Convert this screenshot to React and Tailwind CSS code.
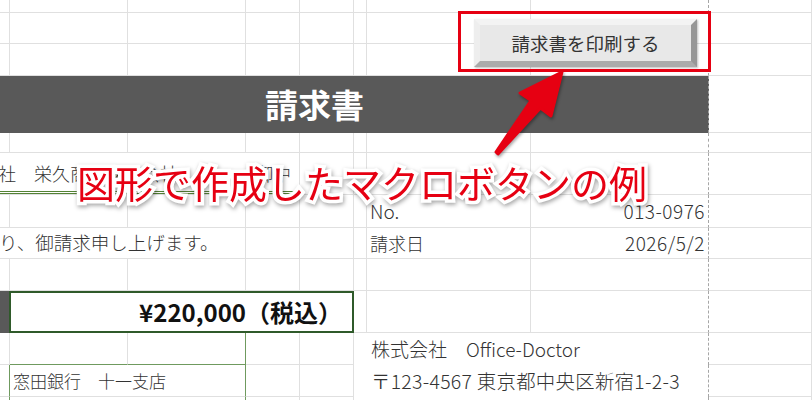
import React from "react";
import clsx from "clsx";

const W = [
  "w-[10px]",
  "w-[118px]",
  "w-[118px]",
  "w-[54px]",
  "w-[54px]",
  "w-[13px]",
  "w-[164px]",
  "w-[178px]",
  "w-[103px]",
];

function Cell({ w, className = "", children, dashed, noB }) {
  return (
    <div
      className={clsx(
        "shrink-0 h-full border-r border-[#e0e0e0]",
        !noB && "border-b",
        w,
        dashed && "border-r-[#a6a6a6] [border-right-style:dashed]",
        className
      )}
    >
      {children}
    </div>
  );
}

function Row({ h, children }) {
  return <div className={clsx("flex shrink-0", h)}>{children}</div>;
}

function Plain({ from = 0, to = 9 }) {
  const out = [];
  for (let i = from; i < to; i++) {
    out.push(<Cell key={i} w={W[i]} dashed={i === 7} />);
  }
  return out;
}

export default function App() {
  return (
    <div className="relative w-[812px] h-[400px] overflow-hidden bg-white font-['Noto_Sans_CJK_JP',sans-serif] font-light text-[#333333]">
      <div className="flex flex-col">
        <Row h="h-[13px]">
          <Plain />
        </Row>
        <Row h="h-[31px]">
          <Plain />
        </Row>
        <Row h="h-[32px]">
          <Plain />
        </Row>
        <Row h="h-[57px]">
          <div className="shrink-0 h-full w-[709px] bg-[#595959] border-r border-r-[#a6a6a6] [border-right-style:dashed] flex items-center pl-[265px]">
            <span className="text-white font-bold text-[33px] leading-none">請求書</span>
          </div>
          <Cell w={W[8]} />
        </Row>
        <Row h="h-[20px]">
          <Plain />
        </Row>
        <Row h="h-[42px]">
          <div className="shrink-0 h-full w-[300px] border-r border-b border-[#e0e0e0] flex flex-col">
            <div className="flex-1 flex items-center justify-between pr-[8px] pt-[2px] text-[18px] whitespace-nowrap">
              <span className="-ml-[2px]">社　栄久商事株式会社</span>
              <span>御中</span>
            </div>
            <div className="h-[3px] border-y border-[#548235]" />
          </div>
          <Plain from={4} />
        </Row>
        <Row h="h-[33px]">
          <Plain to={6} />
          <Cell w={W[6]} className="flex items-center pl-[3px] text-[19px]">
            No.
          </Cell>
          <Cell w={W[7]} dashed className="flex items-center justify-end pr-[3px] text-[19px] tracking-[0.5px]">
            013-0976
          </Cell>
          <Cell w={W[8]} />
        </Row>
        <Row h="h-[31px]">
          <Cell w="w-[246px]" className="flex items-center text-[18.5px] whitespace-nowrap">
            <span className="-ml-[1px]">り、御請求申し上げます。</span>
          </Cell>
          <Plain from={3} to={6} />
          <Cell w={W[6]} className="flex items-center pl-[3px] text-[18px]">
            請求日
          </Cell>
          <Cell w={W[7]} dashed className="flex items-center justify-end pr-[3px] text-[19px] tracking-[0.5px]">
            2026/5/2
          </Cell>
          <Cell w={W[8]} />
        </Row>
        <Row h="h-[32px]">
          <Plain />
        </Row>
        <Row h="h-[42px]">
          <div className="shrink-0 h-full w-[9px] bg-[#595959]" />
          <div className="shrink-0 h-full w-[345px] border-2 border-[#2f5a2a] flex items-center justify-end pr-[10px] text-[24px] font-bold text-[#111111] whitespace-nowrap">
            ¥220,000（税込）
          </div>
          <Plain from={5} />
        </Row>
        <Row h="h-[32px]">
          <Cell w={W[0]} />
          <Cell w={W[1]} className="border-b-[#6f9a5e] border-r-[#e0e0e0]" />
          <Cell w={W[2]} className="border-b-[#6f9a5e] border-r-[#6f9a5e]" />
          <Cell w={W[3]} />
          <Cell w={W[4]} />
          <Cell w="w-[355px]" dashed noB className="flex items-center pl-[17px] text-[19px] whitespace-nowrap">
            株式会社　Office-Doctor
          </Cell>
          <Cell w={W[8]} />
        </Row>
        <Row h="h-[32px]">
          <Cell w={W[0]} className="border-r-[#6f9a5e]" />
          <Cell w="w-[236px]" className="border-r-[#6f9a5e] flex items-center pl-[3px] text-[17px] whitespace-nowrap">
            窓田銀行　十一支店
          </Cell>
          <Cell w={W[3]} />
          <Cell w={W[4]} />
          <Cell w="w-[355px]" dashed noB className="flex items-center pl-[17px] text-[19.4px] tracking-[0.3px] whitespace-nowrap">
            〒123-4567 東京都中央区新宿1-2-3
          </Cell>
          <Cell w={W[8]} />
        </Row>
        <Row h="h-[12px]">
          <Cell w={W[0]} className="border-r-[#6f9a5e]" />
          <Cell w="w-[236px]" className="border-r-[#6f9a5e]" />
          <Cell w={W[3]} />
          <Cell w={W[4]} />
          <Cell w="w-[355px]" dashed noB />
          <Cell w={W[8]} />
        </Row>
      </div>

      {/* macro button */}
      <div className="absolute left-[474px] top-[19px] w-[223px] h-[48px] bg-[#e8e8e8] border-[6px] border-t-[#f3f3f3] border-l-[#eeeeee] border-r-[#979797] border-b-[#ababab] shadow-[1px_1px_2px_rgba(0,0,0,0.25)] flex items-center justify-center">
        <span className="text-[18.5px] leading-none font-normal text-[#333333] whitespace-nowrap">請求書を印刷する</span>
      </div>

      {/* red highlight */}
      <div className="absolute left-[458px] top-[11px] w-[253px] h-[61px] border-[3px] border-[#e60012]" />

      {/* arrow */}
      <svg
        className="absolute left-0 top-0 w-[812px] h-[400px] pointer-events-none [filter:drop-shadow(1px_2px_1.5px_rgba(0,0,0,0.35))]"
        viewBox="0 0 812 400"
      >
        <polygon
          points="562,72 551,116 540.5,108 498,154 496,152 531,100.5 520,93"
          fill="#e60012"
          stroke="#e60012"
          strokeWidth="3"
          strokeLinejoin="round"
        />
      </svg>

      {/* callout */}
      <div className="absolute left-[77px] top-[163px] whitespace-nowrap text-[38px] leading-none font-normal text-[#e60012] [paint-order:stroke_fill] [-webkit-text-stroke:7px_#ffffff] [filter:drop-shadow(1px_2px_2px_rgba(0,0,0,0.35))]">
        図形で作成したマクロボタンの例
      </div>
    </div>
  );
}
